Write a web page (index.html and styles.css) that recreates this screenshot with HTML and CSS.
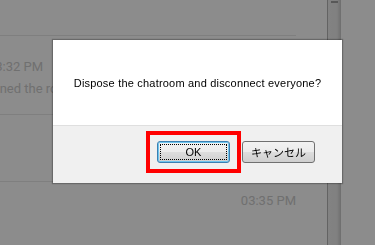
FILE: index.html
```html
<!DOCTYPE html>
<html lang="ja">
<head>
  <meta charset="UTF-8">
  <meta name="viewport" content="width=device-width, initial-scale=1.0">
  <title>Chatroom</title>
  <link rel="stylesheet" href="styles.css">
</head>
<body>
  <div class="page">
    <div class="chat">
      <div class="chat-header"></div>
      <div class="message-list">
        <div class="message">
          <div class="message-time">03:32 PM</div>
          <div class="message-text">joined the room.</div>
        </div>
        <div class="message message-own">
          <div class="message-time">03:34 PM</div>
          <div class="message-text">Thanks, see you all later.</div>
        </div>
        <div class="message message-own">
          <div class="message-time">03:35 PM</div>
        </div>
      </div>
    </div>
    <div class="scrollbar">
      <div class="scrollbar-arrow"></div>
    </div>
    <div class="side"></div>
  </div>

  <div class="modal-overlay"></div>

  <div class="dialog" role="dialog">
    <div class="dialog-body">Dispose the chatroom and disconnect everyone?</div>
    <div class="dialog-footer">
      <span class="mark">
        <button class="dialog-button is-focused">OK</button>
      </span>
      <button class="dialog-button">キャンセル</button>
    </div>
  </div>
</body>
</html>
```

FILE: styles.css
```css
:root {
  --page-background: #FFFFFF;
  --border-color: #E8E8E8;
  --muted-text: #CCCCCC;
  --overlay-color: rgba(0, 0, 0, 0.45);
  --footer-background: #F0F0F0;
  --mark-color: #FF0000;
}

* {
  margin: 0;
  padding: 0;
  box-sizing: border-box;
}

body {
  background-color: var(--page-background);
  font-family: 'Roboto', sans-serif;
  width: 375px;
  height: 245px;
  overflow: hidden;
}

.page {
  display: flex;
  height: 245px;
}

.chat {
  flex: 0 0 327px;
  padding-right: 31px;
}

.chat-header {
  height: 36px;
  border-bottom: 1px solid var(--border-color);
}

.message-list {
  padding-top: 12px;
}

.message {
  padding: 8px 0 14px;
  border-bottom: 1px solid var(--border-color);
  font-size: 13px;
  line-height: 22px;
  color: var(--muted-text);
  white-space: nowrap;
}

.message:first-child {
  padding-top: 8px;
}

.message .message-time {
  margin-left: -12px;
}

.message .message-text {
  margin-left: -14px;
}

.message-own {
  text-align: right;
}

.message-own .message-time,
.message-own .message-text {
  margin-left: 0;
}

.message:last-child {
  border-bottom: none;
}

.scrollbar {
  flex: 0 0 14px;
  background: linear-gradient(to right, #B4B4B4 0, #B4B4B4 1px, #EEEEEE 1px, #EAEAEA 10px, #C8C8C8 14px);
  display: flex;
  justify-content: center;
}

.scrollbar-arrow {
  width: 7px;
  height: 2px;
  margin-top: 1px;
  background-color: #A0A0A0;
}

.side {
  flex: 1;
}

.modal-overlay {
  position: fixed;
  inset: 0;
  background-color: var(--overlay-color);
}

.dialog {
  position: absolute;
  left: 53px;
  top: 40px;
  width: 289px;
  height: 143px;
  display: flex;
  flex-direction: column;
  background-color: #FFFFFF;
  box-shadow: 0 0 1px 1px rgba(0, 0, 0, 0.25);
}

.dialog-body {
  height: 86px;
  display: flex;
  align-items: center;
  justify-content: center;
  font-family: 'Liberation Sans', sans-serif;
  font-size: 11px;
  letter-spacing: 0.2px;
  color: #000000;
  border-bottom: 1px solid #DFDFDF;
}

.dialog-footer {
  flex: 1;
  display: flex;
  justify-content: flex-end;
  align-items: flex-start;
  gap: 12px;
  padding: 15px 27px 0 0;
  background-color: var(--footer-background);
}

.mark {
  position: relative;
  display: flex;
}

.mark::after {
  content: "";
  position: absolute;
  top: -10px;
  bottom: -10px;
  left: -11px;
  right: -11px;
  border: 4px solid var(--mark-color);
}

.dialog-button {
  position: relative;
  width: 73px;
  height: 22px;
  border: 1px solid #707070;
  border-radius: 3px;
  background: linear-gradient(to bottom, #F2F2F2 0%, #EBEBEB 50%, #DDDDDD 51%, #CFCFCF 100%);
  font-family: 'Liberation Sans', 'Noto Sans CJK JP', sans-serif;
  font-size: 11px;
  color: #000000;
}

.dialog-button.is-focused {
  border-color: #3C7FB1;
  box-shadow: inset 0 0 0 1px #6FC5EE;
}

.dialog-button.is-focused::before {
  content: "";
  position: absolute;
  inset: 2px;
  border: 1px dotted #000000;
}
```
